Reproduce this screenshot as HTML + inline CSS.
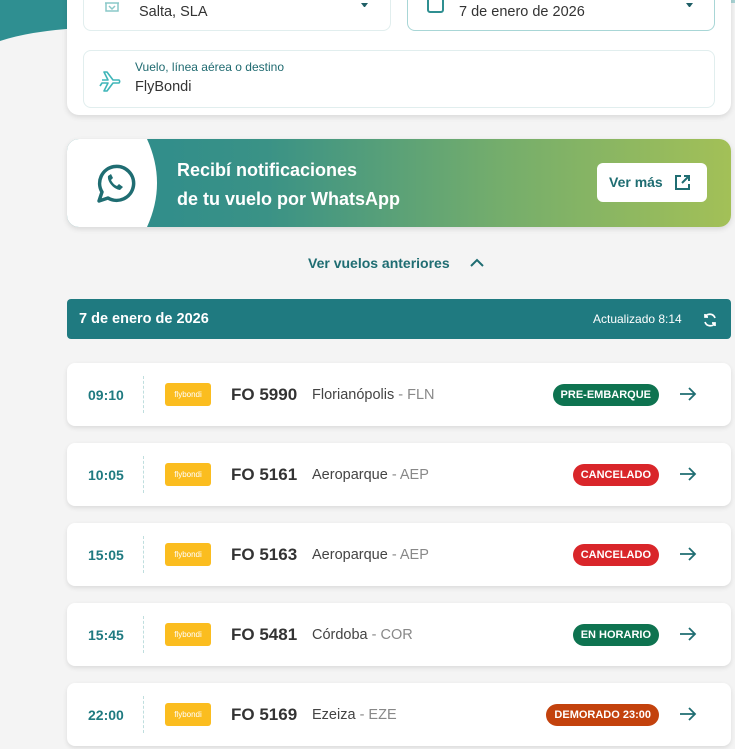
<!DOCTYPE html>
<html><head><meta charset="utf-8"><style>
*{box-sizing:border-box;margin:0;padding:0}
body{width:735px;height:749px;overflow:hidden;background:#f4f4f4;font-family:"Liberation Sans",sans-serif;position:relative;color:#333}
.abs{position:absolute}
.card{background:#fff;border-radius:10px;box-shadow:0 2px 6px rgba(0,0,0,.12)}
.inp{background:#fff;border:1px solid #e1eeee;border-radius:8px}
.row{position:absolute;left:67px;width:664px;height:63px;background:#fff;border-radius:8px;box-shadow:0 2px 5px rgba(0,0,0,.1)}
.row .t{position:absolute;left:21px;top:24px;font-size:14px;font-weight:bold;color:#1f7a80}
.row .d{position:absolute;left:76px;top:13px;height:37px;border-left:1px dashed #bfdede}
.row .lg{position:absolute;left:98px;top:20px;width:46px;height:23px;background:#fbbd1f;border-radius:3px;color:#fff;font-size:8px;text-align:center;line-height:23px}
.row .fo{position:absolute;left:164px;top:22px;font-size:17px;font-weight:bold;color:#333}
.row .ds{position:absolute;left:245px;top:24px;font-size:14.5px;color:#444}
.row .ds span{color:#888}
.row .b{position:absolute;right:72px;top:21px;height:22px;line-height:22px;border-radius:11px;color:#fff;font-size:11px;font-weight:bold;padding:0 8px}
.row svg{position:absolute;left:612px;top:23px}
</style></head><body>
<div class="abs" style="left:0;top:0;width:735px;height:3px;background:#a9d3d4"></div>
<svg class="abs" style="left:0;top:0" width="80" height="45"><path d="M0 0H80V28Q30 31 0 41Z" fill="#2f8f91"/></svg>
<div class="abs card" style="left:67px;top:-20px;width:664px;height:135px;border-radius:0 0 12px 12px"></div>
<div class="abs inp" style="left:83px;top:-10px;width:308px;height:41px"></div>
<svg class="abs" style="left:103px;top:2px" width="18" height="12"><path d="M2 1h14M3 1v8h12V1M6 4l3 3 3-3" stroke="#8ac8c8" fill="none" stroke-width="1.5"/></svg>
<div class="abs" style="left:139px;top:4px;font-size:14.5px;color:#333">Salta, SLA</div>
<div class="abs" style="left:361px;top:3px;width:7px;height:4px;border-top:4px solid #1f5f66;border-left:3px solid transparent;border-right:3px solid transparent"></div>
<div class="abs inp" style="left:407px;top:-10px;width:308px;height:41px;border-color:#a8d6d6"></div>
<div class="abs" style="left:427px;top:-4px;width:17px;height:17px;border:2px solid #2f8f91;border-radius:3px"></div>
<div class="abs" style="left:459px;top:4px;font-size:14.5px;color:#333">7 de enero de 2026</div>
<div class="abs" style="left:686px;top:3px;width:7px;height:4px;border-top:4px solid #1f5f66;border-left:3px solid transparent;border-right:3px solid transparent"></div>
<div class="abs inp" style="left:83px;top:50px;width:632px;height:58px"></div>
<svg class="abs" style="left:99px;top:68px" width="26" height="24" viewBox="0 0 26 24"><path d="M3 12h6l-4-8h3l6 8h6a2 2 0 0 1 0 3h-6l-6 8H5l4-8H3l-2 3" stroke="#3fb5b8" stroke-width="1.6" fill="none" stroke-linejoin="round"/></svg>
<div class="abs" style="left:135px;top:60px;font-size:12px;color:#1f6a70">Vuelo, línea aérea o destino</div>
<div class="abs" style="left:135px;top:79px;font-size:14.5px;color:#333">FlyBondi</div>

<div class="abs" style="left:67px;top:139px;width:664px;height:88px;border-radius:12px;overflow:hidden;box-shadow:0 2px 6px rgba(0,0,0,.12);background:linear-gradient(90deg,#2a8a8e 0%,#3a9286 30%,#74ad6c 65%,#a3c057 100%)">
<svg class="abs" style="left:0;top:0" width="95" height="88"><path d="M0 0H80Q100 44 80 88H0Z" fill="#fff"/></svg>
<svg class="abs" style="left:26px;top:23px" width="44" height="44" viewBox="0 0 44 44"><path d="M6 39l3-9A17 17 0 1 1 15 36Z" fill="none" stroke="#1f6d72" stroke-width="3.5" stroke-linejoin="round"/><path d="M15 14c-1 5 5 13 12 14l3-3-4-3-2 2c-3-1-5-4-6-6l2-2-2-4z" fill="#1f6d72"/></svg>
<div class="abs" style="left:110px;top:17px;color:#fff;font-weight:bold;font-size:18px;line-height:29px">Recibí notificaciones<br>de tu vuelo por WhatsApp</div>
<div class="abs" style="left:530px;top:24px;width:110px;height:39px;background:#fff;border-radius:6px;color:#1f6d72;font-weight:bold;font-size:14px;line-height:39px;padding-left:12px">Ver más
<svg class="abs" style="left:77px;top:11px" width="17" height="17" viewBox="0 0 17 17"><path d="M7 2H2v13h13v-5M10 2h5v5M15 2L8 9" stroke="#1f6d72" stroke-width="2" fill="none"/></svg></div>
</div>

<div class="abs" style="left:308px;top:255px;font-size:14px;font-weight:bold;color:#1f6d72">Ver vuelos anteriores</div>
<svg class="abs" style="left:469px;top:256px" width="16" height="14"><path d="M2 10l6-6 6 6" stroke="#1f6d72" stroke-width="2" fill="none"/></svg>

<div class="abs" style="left:67px;top:299px;width:664px;height:40px;background:#1f7a80;border-radius:4px"></div>
<div class="abs" style="left:79px;top:311px;font-size:14.5px;font-weight:bold;color:#fff">7 de enero de 2026</div>
<div class="abs" style="left:593px;top:312px;font-size:12px;color:#fff">Actualizado 8:14</div>
<svg class="abs" style="left:702px;top:312px" width="16" height="16" viewBox="0 0 16 16"><path d="M13 6A5.5 5.5 0 0 0 3 5M3 10a5.5 5.5 0 0 0 10 1M3 2v3h3M13 14v-3h-3" stroke="#fff" stroke-width="1.7" fill="none"/></svg>

<div class="row" style="top:363px"><div class="t">09:10</div><div class="d"></div><div class="lg">flybondi</div><div class="fo">FO 5990</div><div class="ds">Florianópolis <span>- FLN</span></div><div class="b" style="background:#0e7350">PRE-EMBARQUE</div><svg width="18" height="16"><path d="M1 8h15M10 2l6 6-6 6" stroke="#1f6d72" stroke-width="1.8" fill="none"/></svg></div>
<div class="row" style="top:443px"><div class="t">10:05</div><div class="d"></div><div class="lg">flybondi</div><div class="fo">FO 5161</div><div class="ds">Aeroparque <span>- AEP</span></div><div class="b" style="background:#d9262a">CANCELADO</div><svg width="18" height="16"><path d="M1 8h15M10 2l6 6-6 6" stroke="#1f6d72" stroke-width="1.8" fill="none"/></svg></div>
<div class="row" style="top:523px"><div class="t">15:05</div><div class="d"></div><div class="lg">flybondi</div><div class="fo">FO 5163</div><div class="ds">Aeroparque <span>- AEP</span></div><div class="b" style="background:#d9262a">CANCELADO</div><svg width="18" height="16"><path d="M1 8h15M10 2l6 6-6 6" stroke="#1f6d72" stroke-width="1.8" fill="none"/></svg></div>
<div class="row" style="top:603px"><div class="t">15:45</div><div class="d"></div><div class="lg">flybondi</div><div class="fo">FO 5481</div><div class="ds">Córdoba <span>- COR</span></div><div class="b" style="background:#0e7350">EN HORARIO</div><svg width="18" height="16"><path d="M1 8h15M10 2l6 6-6 6" stroke="#1f6d72" stroke-width="1.8" fill="none"/></svg></div>
<div class="row" style="top:683px"><div class="t">22:00</div><div class="d"></div><div class="lg">flybondi</div><div class="fo">FO 5169</div><div class="ds">Ezeiza <span>- EZE</span></div><div class="b" style="background:#c3420d">DEMORADO 23:00</div><svg width="18" height="16"><path d="M1 8h15M10 2l6 6-6 6" stroke="#1f6d72" stroke-width="1.8" fill="none"/></svg></div>
</body></html>
